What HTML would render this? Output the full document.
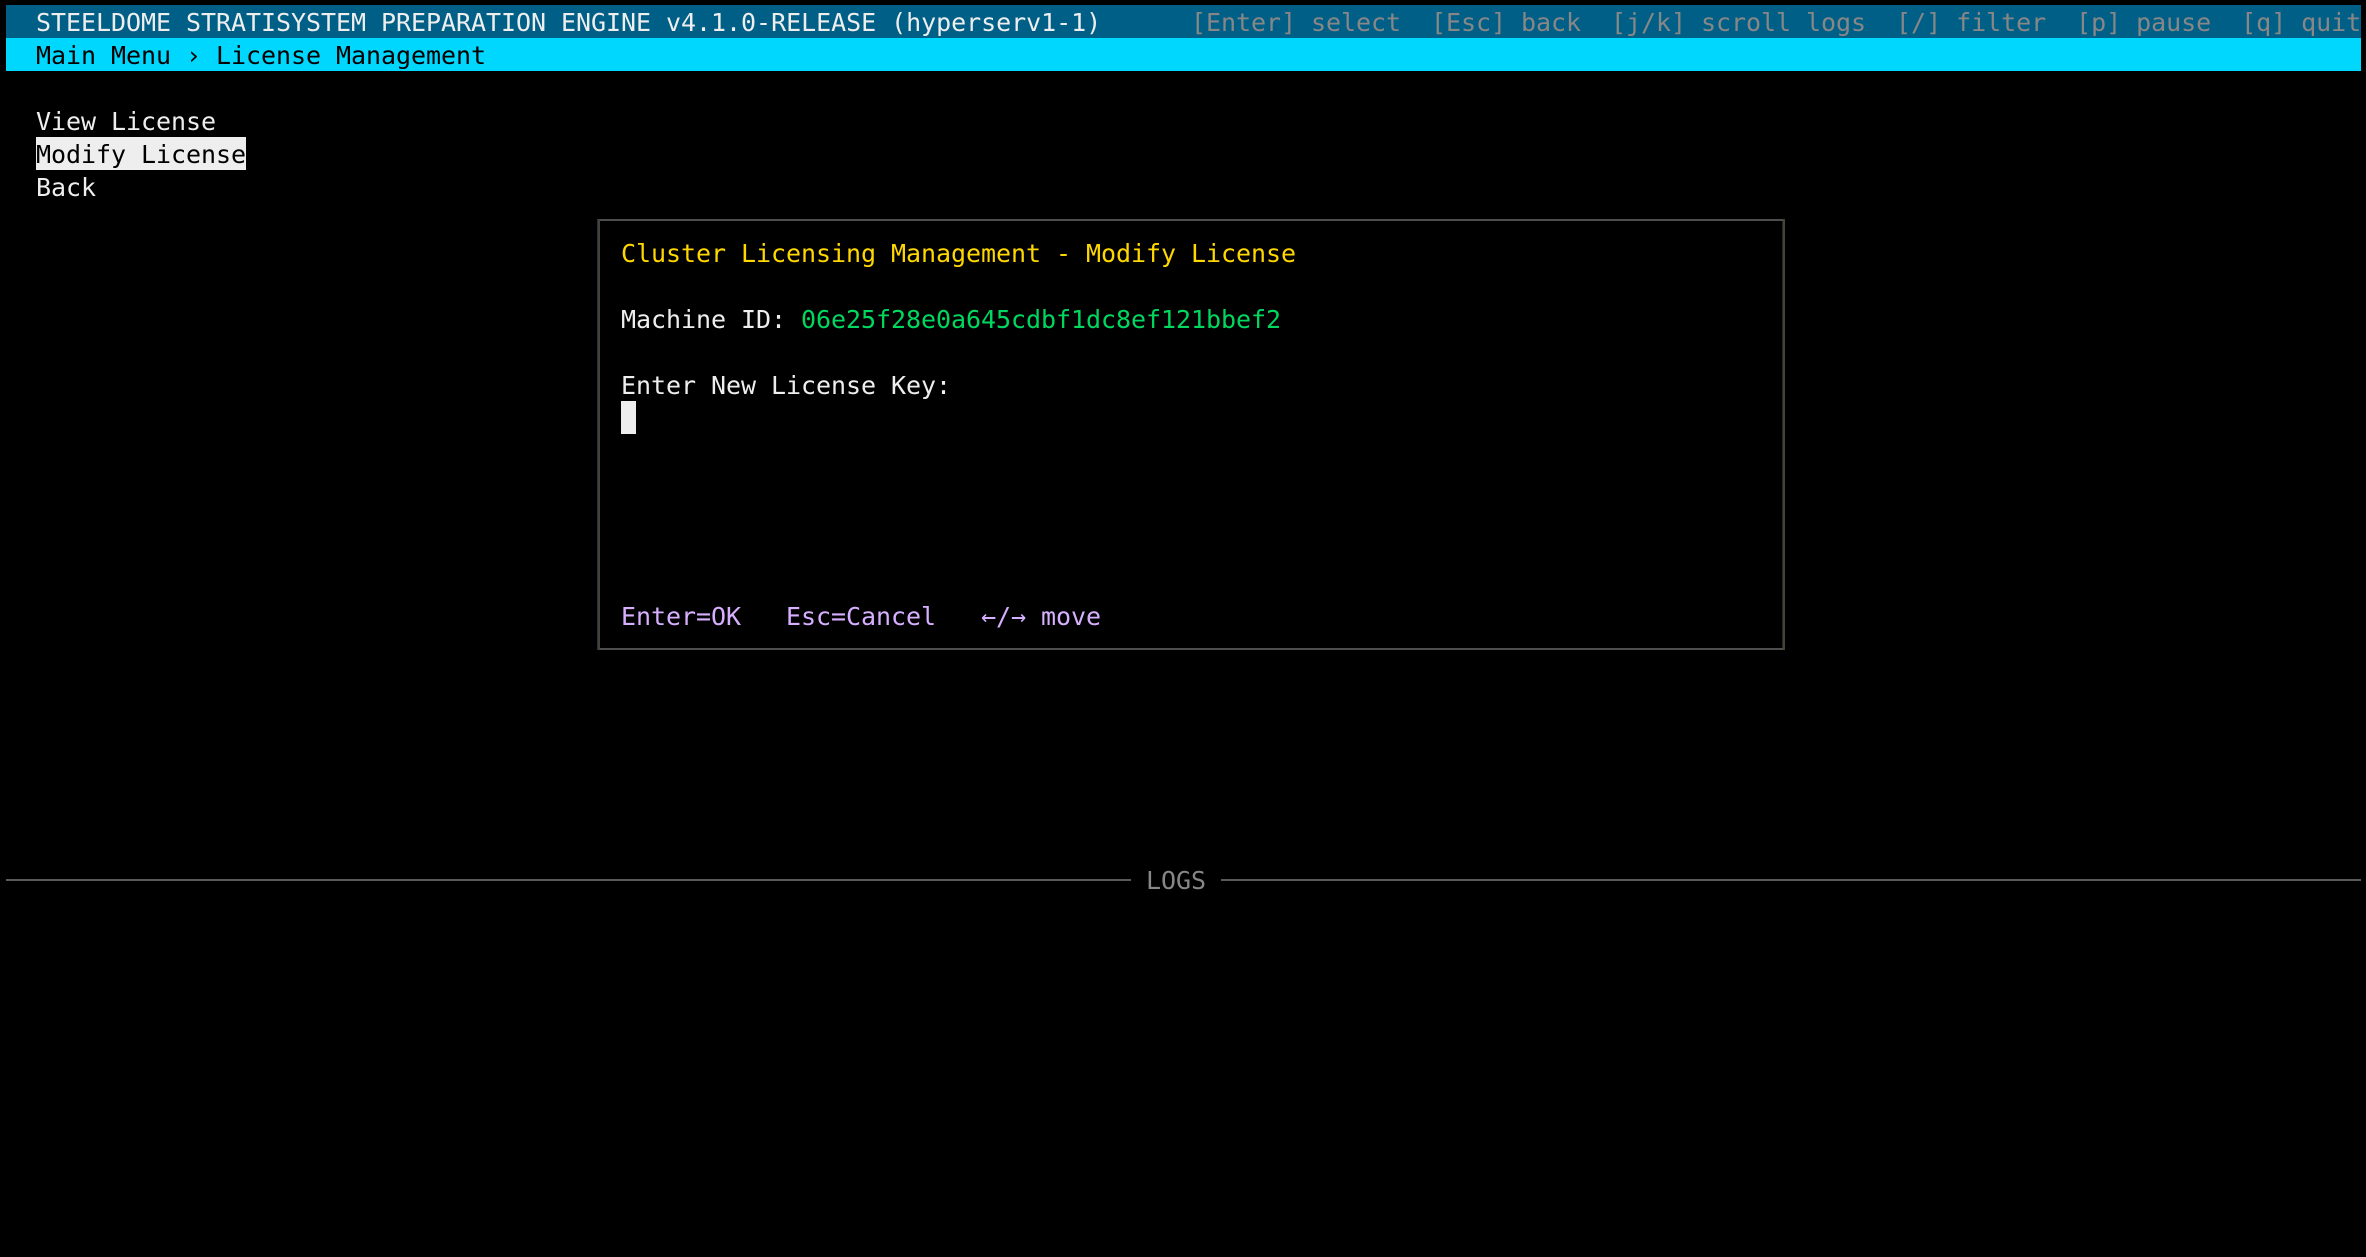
<!DOCTYPE html>
<html><head><meta charset="utf-8"><style>
html,body{margin:0;padding:0;background:#000;width:2366px;height:1257px;overflow:hidden}
.a{position:absolute}
.t{position:absolute;font-family:"DejaVu Sans Mono","Liberation Mono",monospace;font-size:25px;letter-spacing:-0.05px;line-height:33px;height:33px;white-space:pre;color:#eee;margin-top:1px}
</style></head><body>
<div class="a" style="left:6px;top:5px;width:2355px;height:33px;background:#005f87"></div>
<div class="a" style="left:6px;top:38px;width:2355px;height:33px;background:#00d7ff"></div>
<div class="t" style="left:36px;top:5px">STEELDOME STRATISYSTEM PREPARATION ENGINE v4.1.0-RELEASE (hyperserv1-1)</div>
<div class="t" style="left:1191px;top:5px;width:1170px;overflow:hidden;color:#878787">[Enter] select  [Esc] back  [j/k] scroll logs  [/] filter  [p] pause  [q] quit</div>
<div class="t" style="left:36px;top:38px;color:#000">Main Menu › License Management</div>
<div class="t" style="left:36px;top:104px">View License</div>
<div class="a" style="left:36px;top:137px;width:210px;height:33px;background:#eee"></div>
<div class="t" style="left:36px;top:137px;color:#000">Modify License</div>
<div class="t" style="left:36px;top:170px">Back</div>
<div class="a" style="left:598px;top:219px;width:1187px;height:2px;background:#4e4e4e"></div>
<div class="a" style="left:598px;top:648px;width:1187px;height:2px;background:#4e4e4e"></div>
<div class="a" style="left:597px;top:219px;width:1px;height:431px;background:#1c3444"></div>
<div class="a" style="left:598px;top:219px;width:2px;height:431px;background:#4a4238"></div>
<div class="a" style="left:1782px;top:221px;width:1px;height:427px;background:#0c2c40"></div>
<div class="a" style="left:1783px;top:219px;width:2px;height:431px;background:#50402f"></div>
<div class="t" style="left:621px;top:236px;color:#ffd700">Cluster Licensing Management - Modify License</div>
<div class="t" style="left:621px;top:302px">Machine ID: <span style="color:#00d75f">06e25f28e0a645cdbf1dc8ef121bbef2</span></div>
<div class="t" style="left:621px;top:368px">Enter New License Key:</div>
<div class="a" style="left:621px;top:401px;width:15px;height:33px;background:#eee"></div>
<div class="t" style="left:621px;top:599px;color:#d7afff">Enter=OK   Esc=Cancel   ←/→ move</div>
<div class="a" style="left:6px;top:879px;width:1125px;height:2px;background:#5a5a5a"></div>
<div class="a" style="left:1221px;top:879px;width:1140px;height:2px;background:#5a5a5a"></div>
<div class="t" style="left:1146px;top:863px;color:#878787">LOGS</div>
</body></html>
